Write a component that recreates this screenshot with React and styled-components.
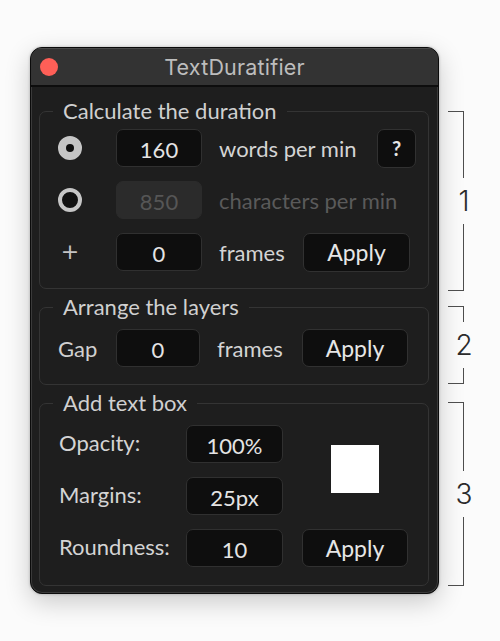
import React from 'react';
import styled, { createGlobalStyle } from 'styled-components';

const Global = createGlobalStyle`
  html, body { margin: 0; padding: 0; background: #fbfbfb; }
  body { font-family: Lato, "Open Sans", sans-serif; }
  * { box-sizing: border-box; }
`;

const Page = styled.div`
  display: flex;
  align-items: flex-start;
  width: 500px;
  height: 641px;
  padding: 47px 0 0 30px;
`;

const Window = styled.div`
  width: 409px;
  height: 547px;
  flex-shrink: 0;
  border-radius: 12px;
  background: #1e1e1e;
  border: 1px solid #0b0b0b;
  box-shadow: inset 0 0 0 1px #3a3a3a, 0 8px 26px rgba(0, 0, 0, 0.2), 0 0 3px rgba(0, 0, 0, 0.25);
  display: flex;
  flex-direction: column;
  overflow: hidden;
`;

const TitleBar = styled.div`
  height: 39px;
  flex-shrink: 0;
  display: grid;
  grid-template-columns: 1fr auto 1fr;
  align-items: center;
  background: #333333;
  border-bottom: 2px solid #0d0d0d;
  box-shadow: inset 0 1px 0 #4a4a4a;
`;

const CloseDot = styled.span`
  width: 18px;
  height: 18px;
  border-radius: 50%;
  background: #fe5f57;
  margin-left: 9px;
`;

const Title = styled.div`
  font-family: Inter, "Liberation Sans", sans-serif;
  font-size: 21.5px;
  color: #bdbdbd;
  letter-spacing: 0.2px;
`;

const Body = styled.div`
  display: flex;
  flex-direction: column;
  gap: 6px;
  padding: 12px 9px 7px 8px;
`;

const Section = styled.fieldset`
  margin: 0;
  min-width: 0;
  border: 1px solid #343434;
  border-radius: 7px;
  padding: ${(p) => p.$pad};
  display: flex;
  flex-direction: column;
  gap: 14px;
`;

const Legend = styled.legend`
  padding: 0 10px;
  margin-left: ${(p) => p.$ml || '-5px'};
  font-size: 22px;
  line-height: 24px;
  color: #d0d0d0;
`;

const Row = styled.div`
  display: flex;
  align-items: center;
  height: 38px;
`;

const Lead = styled.div`
  width: 58px;
  flex-shrink: 0;
  display: flex;
  align-items: center;
  font-size: 22px;
  color: #d0d0d0;
`;

const Radio = styled.span`
  width: 24px;
  height: 24px;
  border-radius: 50%;
  background: ${(p) => (p.$on ? '#c6c6c6' : '#111')};
  border: ${(p) => (p.$on ? '8px solid #c6c6c6' : '4px solid #c6c6c6')};
  position: relative;
  &::after {
    content: '';
    position: absolute;
    inset: 0;
    border-radius: 50%;
    background: ${(p) => (p.$on ? '#111' : 'transparent')};
  }
`;

const Plus = styled.span`
  width: 24px;
  text-align: center;
  font-family: "DejaVu Sans", sans-serif;
  font-size: 22px;
  font-weight: 400;
  color: #c4c4c4;
  line-height: 1;
`;

const Field = styled.input`
  width: ${(p) => p.$w || '86px'};
  height: 38px;
  flex-shrink: 0;
  border-radius: 7px;
  border: 1px solid ${(p) => (p.disabled ? '#2b2b2b' : '#303030')};
  background: ${(p) => (p.disabled ? '#2b2b2b' : '#0e0e0e')};
  color: ${(p) => (p.disabled ? '#565656' : '#e4e4e4')};
  font-family: Lato, "Open Sans", sans-serif;
  font-size: 22px;
  text-align: center;
  padding: 2px 0 0;
  outline: none;
  -webkit-text-fill-color: ${(p) => (p.disabled ? '#565656' : '#e4e4e4')};
  opacity: 1;
`;

const Label = styled.span`
  margin-left: 17px;
  font-size: 22px;
  color: ${(p) => (p.$dim ? '#5a5a5a' : '#d4d4d4')};
  white-space: nowrap;
`;

const Button = styled.button`
  margin-left: auto;
  margin-right: ${(p) => p.$mr || '0px'};
  width: ${(p) => p.$w || '107px'};
  height: ${(p) => p.$h || '39px'};
  border-radius: 7px;
  border: 1px solid #313131;
  background: #0e0e0e;
  color: #e6e6e6;
  font-family: Lato, "Open Sans", sans-serif;
  font-size: ${(p) => p.$fs || '23px'};
  font-weight: ${(p) => p.$fw || 400};
  padding: 0;
  cursor: pointer;
`;

const BoxGrid = styled.div`
  display: grid;
  grid-template-columns: 108px 97px 106px;
  grid-auto-rows: 38px;
  column-gap: 19px;
  row-gap: 14px;
  align-items: center;
`;

const GridLabel = styled.span`
  font-size: 22px;
  color: #d4d4d4;
  margin-top: -3px;
  white-space: nowrap;
`;

const Swatch = styled.div`
  grid-column: 3;
  grid-row: 1 / span 2;
  justify-self: center;
  align-self: center;
  width: 48px;
  height: 48px;
  background: #ffffff;
  margin-top: -2px;
`;

const GridButton = styled(Button)`
  margin: 0;
  width: 106px;
  height: 38px;
`;

const Brackets = styled.div`
  display: flex;
  flex-direction: column;
  margin-left: 9px;
`;

const Bracket = styled.div`
  width: 16px;
  height: ${(p) => p.$h}px;
  margin-top: ${(p) => p.$mt}px;
  display: flex;
  flex-direction: column;
`;

const BracketTop = styled.div`
  flex: 1;
  border-top: 1.5px solid #4d4d4d;
  border-right: 1.5px solid #4d4d4d;
`;

const BracketBottom = styled.div`
  flex: 1;
  border-bottom: 1.5px solid #4d4d4d;
  border-right: 1.5px solid #4d4d4d;
`;

const BracketNum = styled.div`
  height: 46px;
  width: 32px;
  display: flex;
  align-items: center;
  justify-content: center;
  font-family: Inter, "Liberation Sans", sans-serif;
  font-weight: 300;
  font-size: 28px;
  color: #2b2b2b;
`;

export default function App() {
  return (
    <>
      <Global />
      <Page>
        <Window>
          <TitleBar>
            <CloseDot />
            <Title>TextDuratifier</Title>
            <span />
          </TitleBar>
          <Body>
            <Section $pad="6px 12px 17px 18px">
              <Legend>Calculate the duration</Legend>
              <Row>
                <Lead>
                  <Radio $on />
                </Lead>
                <Field defaultValue="160" />
                <Label>words per min</Label>
                <Button $w="39px" $h="39px" $fw={700} $fs="20px">?</Button>
              </Row>
              <Row>
                <Lead>
                  <Radio />
                </Lead>
                <Field defaultValue="850" disabled />
                <Label $dim>characters per min</Label>
              </Row>
              <Row>
                <Lead>
                  <Plus>+</Plus>
                </Lead>
                <Field defaultValue="0" />
                <Label>frames</Label>
                <Button $mr="6px">Apply</Button>
              </Row>
            </Section>

            <Section $pad="10px 12px 17px 18px">
              <Legend>Arrange the layers</Legend>
              <Row>
                <Lead>Gap</Lead>
                <Field defaultValue="0" $w="84px" />
                <Label>frames</Label>
                <Button $w="106px" $h="38px" $mr="8px">Apply</Button>
              </Row>
            </Section>

            <Section $pad="10px 12px 18px 19px">
              <Legend $ml="-6px">Add text box</Legend>
              <BoxGrid>
                <GridLabel>Opacity:</GridLabel>
                <Field defaultValue="100%" $w="97px" />
                <Swatch />
                <GridLabel>Margins:</GridLabel>
                <Field defaultValue="25px" $w="97px" />
                <GridLabel>Roundness:</GridLabel>
                <Field defaultValue="10" $w="97px" />
                <GridButton>Apply</GridButton>
              </BoxGrid>
            </Section>
          </Body>
        </Window>

        <Brackets>
          <Bracket $h={180} $mt={64}>
            <BracketTop />
            <BracketNum>1</BracketNum>
            <BracketBottom />
          </Bracket>
          <Bracket $h={78} $mt={15}>
            <BracketTop />
            <BracketNum>2</BracketNum>
            <BracketBottom />
          </Bracket>
          <Bracket $h={184} $mt={18}>
            <BracketTop />
            <BracketNum>3</BracketNum>
            <BracketBottom />
          </Bracket>
        </Brackets>
      </Page>
    </>
  );
}
